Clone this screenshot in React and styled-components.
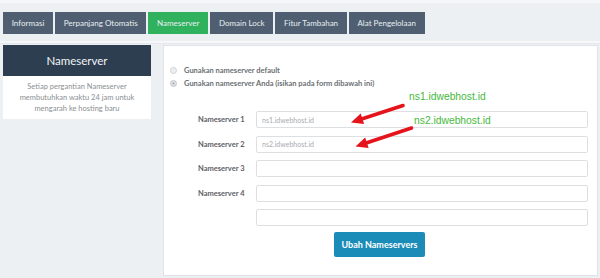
import React from "react";
import styled, { createGlobalStyle } from "styled-components";

const GlobalStyle = createGlobalStyle`
  html, body {
    margin: 0;
    padding: 0;
    background: #edf0f3;
    font-family: Lato, "Open Sans", "Liberation Sans", sans-serif;
  }
  * {
    box-sizing: border-box;
  }
`;

const tabs = [
  "Informasi",
  "Perpanjang Otomatis",
  "Nameserver",
  "Domain Lock",
  "Fitur Tambahan",
  "Alat Pengelolaan",
];

const servers = [
  { label: "Nameserver 1", value: "ns1.idwebhost.id" },
  { label: "Nameserver 2", value: "ns2.idwebhost.id" },
  { label: "Nameserver 3", value: "" },
  { label: "Nameserver 4", value: "" },
  { label: "", value: "" },
];

function Arrow({ x1, y1, x2, y2 }) {
  const angle = Math.atan2(y2 - y1, x2 - x1);
  const len = 12;
  const half = 5.5;
  const bx = x2 - len * Math.cos(angle);
  const by = y2 - len * Math.sin(angle);
  const px = -Math.sin(angle) * half;
  const py = Math.cos(angle) * half;
  return (
    <g>
      <line x1={x1} y1={y1} x2={bx} y2={by} stroke="#e5131b" strokeWidth="3.6" strokeLinecap="round" />
      <polygon
        points={`${x2},${y2} ${bx + px},${by + py} ${bx - px},${by - py}`}
        fill="#e5131b"
      />
    </g>
  );
}

function App() {
  return (
    <Page>
      <GlobalStyle />
      <TabBar>
        {tabs.map((t) => (
          <Tab key={t} active={t === "Nameserver"}>
            {t}
          </Tab>
        ))}
      </TabBar>
      <Divider />
      <Content>
        <Sidebar>
          <SideHeader>Nameserver</SideHeader>
          <SideBody>
            Setiap pergantian Nameserver
            <br />
            membutuhkan waktu 24 jam untuk
            <br />
            mengarah ke hosting baru
          </SideBody>
        </Sidebar>
        <Card>
          <RadioRow>
            <Radio />
            Gunakan nameserver default
          </RadioRow>
          <RadioRow>
            <Radio checked />
            Gunakan nameserver Anda (isikan pada form dibawah ini)
          </RadioRow>
          <Form>
            {servers.map((s, i) => (
              <FieldRow key={i}>
                <Label>{s.label}</Label>
                <Input>{s.value}</Input>
              </FieldRow>
            ))}
          </Form>
          <ButtonRow>
            <Button>Ubah Nameservers</Button>
          </ButtonRow>
        </Card>
      </Content>

      <Note style={{ left: 409, top: 87 }}>ns1.idwebhost.id</Note>
      <Note style={{ left: 414, top: 111 }}>ns2.idwebhost.id</Note>
      <ArrowLayer width="600" height="278" viewBox="0 0 600 278">
        <Arrow x1={403} y1={102.5} x2={351} y2={119.5} />
        <Arrow x1={411.5} y1={125} x2={355.5} y2={143.5} />
      </ArrowLayer>
    </Page>
  );
}

const Page = styled.div`
  position: relative;
  width: 600px;
  height: 278px;
  overflow: hidden;
  border-top: 3px solid #f6f7f9;
  padding-top: 9px;
`;

const TabBar = styled.div`
  display: flex;
  gap: 2px;
  padding-left: 3px;
  height: 22px;
`;

const Tab = styled.div`
  display: flex;
  align-items: center;
  padding: 0 8.7px;
  background: ${(p) => (p.active ? "#2fb15e" : "#4f5f71")};
  color: #e9eef2;
  font-size: 8px;
`;

const Divider = styled.div`
  margin-top: 7px;
  height: 3px;
  background: #f6f7f9;
  border-bottom: 1px solid #e4e7eb;
`;

const Content = styled.div`
  display: flex;
  gap: 12px;
  padding-left: 3px;
  margin-top: 1px;
  align-items: flex-start;
`;

const Sidebar = styled.div`
  width: 148px;
  background: #fff;
`;

const SideHeader = styled.div`
  height: 31px;
  display: flex;
  align-items: center;
  justify-content: center;
  background: #2c3e50;
  color: #f1f4f7;
  font-size: 11.5px;
`;

const SideBody = styled.div`
  padding: 5px 4px 5px;
  text-align: center;
  color: #8a8f94;
  font-size: 7.5px;
  line-height: 11px;
`;

const Card = styled.div`
  width: 435px;
  height: 231px;
  background: #fff;
  border: 1px solid #dfe2e6;
  padding: 18px 8px 0 6px;
`;

const RadioRow = styled.div`
  display: flex;
  align-items: center;
  gap: 7px;
  height: 13px;
  color: #6b6f73;
  font-size: 7.5px;
  font-weight: 700;
`;

const Radio = styled.span`
  width: 7px;
  height: 7px;
  border-radius: 50%;
  border: 1px solid #cfd3d7;
  background: ${(p) => (p.checked ? "#9aa0a6" : "#eceef0")};
  box-shadow: ${(p) => (p.checked ? "inset 0 0 0 1.5px #e6e8ea" : "none")};
  flex-shrink: 0;
`;

const Form = styled.div`
  display: flex;
  flex-direction: column;
  gap: 7.6px;
  margin-top: 21px;
  padding-left: 28px;
`;

const FieldRow = styled.div`
  display: grid;
  grid-template-columns: 58px 332px;
  align-items: center;
`;

const Label = styled.div`
  color: #5d6166;
  font-size: 7.5px;
  font-weight: 700;
`;

const Input = styled.div`
  height: 17px;
  border: 1px solid #dde0e3;
  border-radius: 2px;
  padding: 0 5px;
  display: flex;
  align-items: center;
  color: #a7abaf;
  font-size: 7px;
`;

const ButtonRow = styled.div`
  display: flex;
  justify-content: center;
  margin-top: 6px;
`;

const Button = styled.div`
  width: 91px;
  height: 25px;
  background: #1b8bb8;
  border-radius: 2px;
  color: #fff;
  font-size: 9px;
  font-weight: 700;
  display: flex;
  align-items: center;
  justify-content: center;
`;

const Note = styled.div`
  position: absolute;
  color: #45b93a;
  font-family: "Liberation Sans", Arial, sans-serif;
  font-size: 10.3px;
  line-height: 14px;
`;

const ArrowLayer = styled.svg`
  position: absolute;
  left: 0;
  top: 0;
  pointer-events: none;
`;

export default App;
